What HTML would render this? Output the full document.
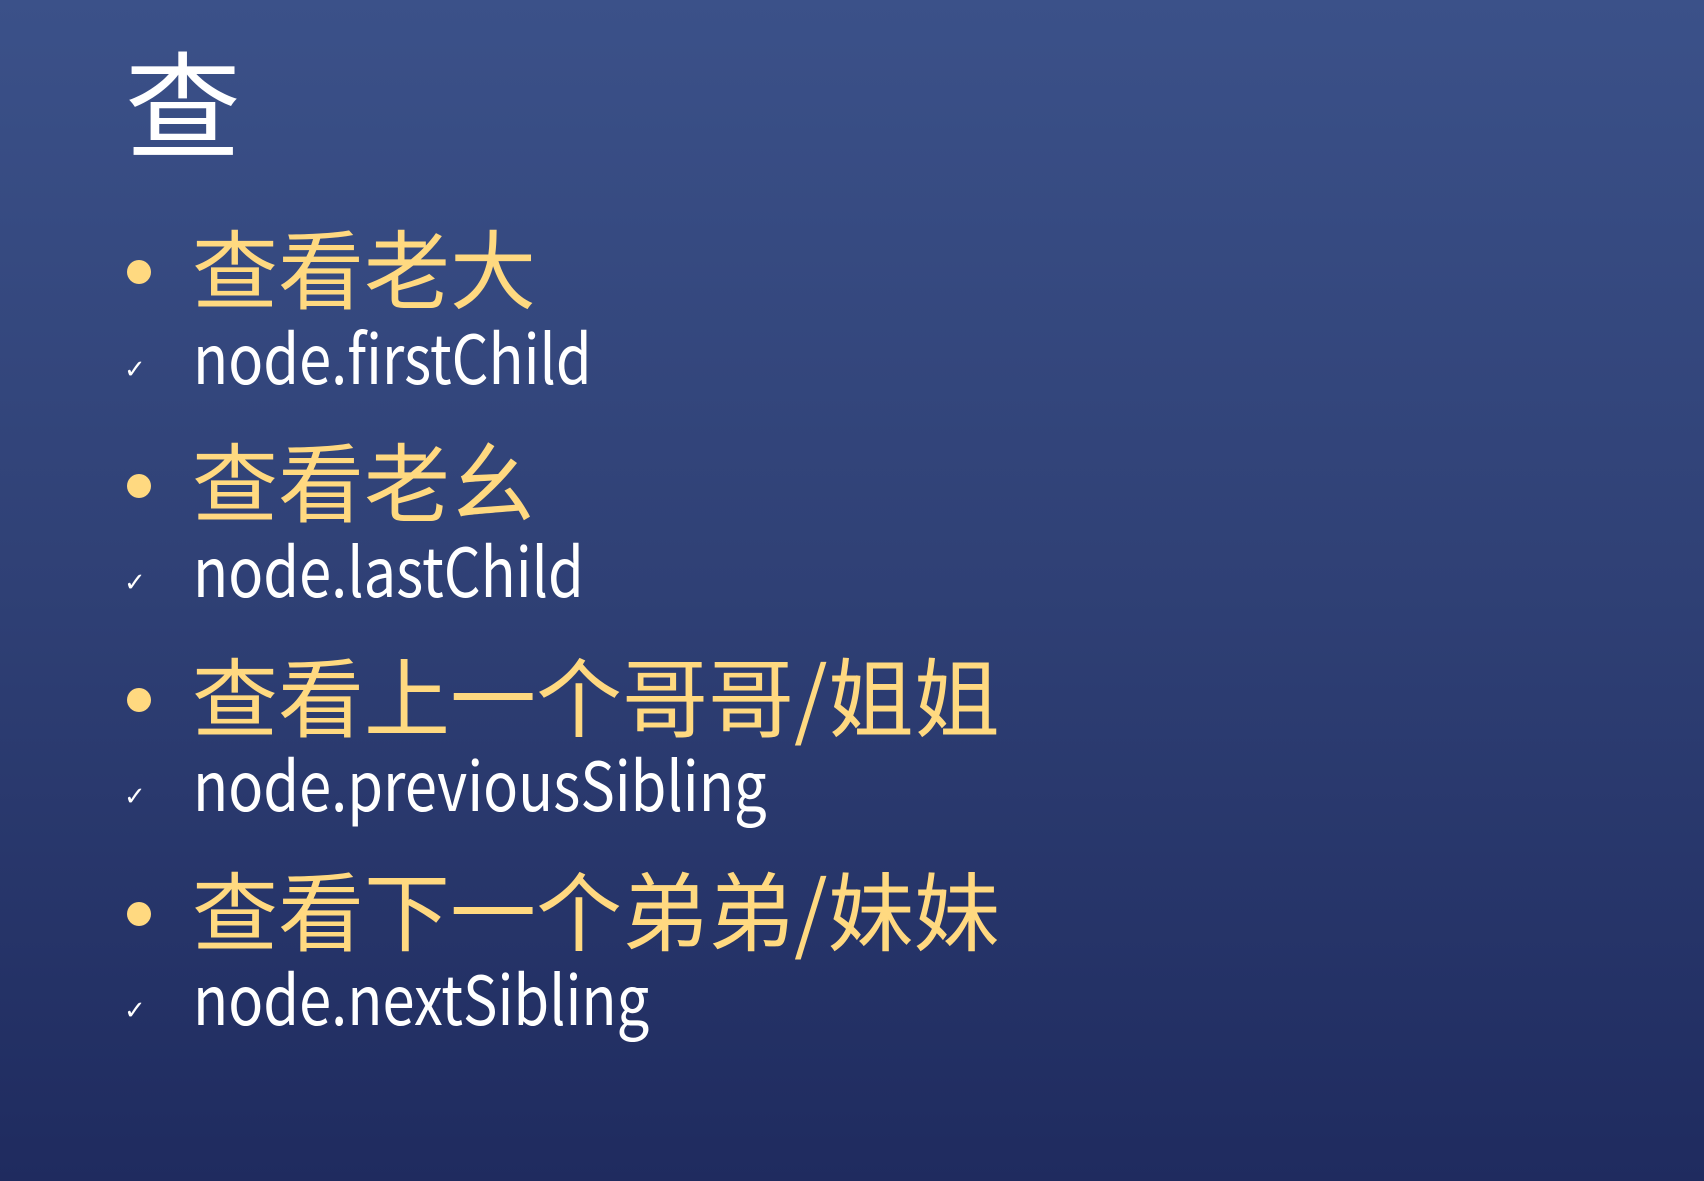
<!DOCTYPE html>
<html><head><meta charset="utf-8"><style>
html,body{margin:0;padding:0}
body{width:1704px;height:1181px;position:relative;overflow:hidden;background:linear-gradient(180deg,#3b5189 0%,#2f4075 50%,#1f2b5f 100%);font-family:"Noto Sans CJK SC","Liberation Sans",sans-serif}
.a{position:absolute;line-height:1;white-space:nowrap}
.t{font-size:116px;color:#fff;left:125px;top:41px}
.c{font-size:86px;color:#ffd980;left:192px}
.n{font-size:68px;color:#fff;left:193px;transform:scaleX(0.85);transform-origin:0 0}
.b{position:absolute;width:24px;height:24px;border-radius:50%;background:#ffd980;left:127px}
.k{position:absolute;left:124px;font-size:26px;color:#fff;line-height:1;font-family:"DejaVu Sans",sans-serif}
</style></head><body>
<div class="a t">查</div>
<div class="b" style="top:260px"></div>
<div class="a c" style="top:222px">查看老大</div>
<div class="k" style="top:357px">✓</div>
<div class="a n" style="top:321px">node.firstChild</div>
<div class="b" style="top:474px"></div>
<div class="a c" style="top:435px">查看老幺</div>
<div class="k" style="top:570px">✓</div>
<div class="a n" style="top:534px">node.lastChild</div>
<div class="b" style="top:688px"></div>
<div class="a c" style="top:650px">查看上一个哥哥/姐姐</div>
<div class="k" style="top:784px">✓</div>
<div class="a n" style="top:748px">node.previousSibling</div>
<div class="b" style="top:902px"></div>
<div class="a c" style="top:864px">查看下一个弟弟/妹妹</div>
<div class="k" style="top:998px">✓</div>
<div class="a n" style="top:962px">node.nextSibling</div>
</body></html>
